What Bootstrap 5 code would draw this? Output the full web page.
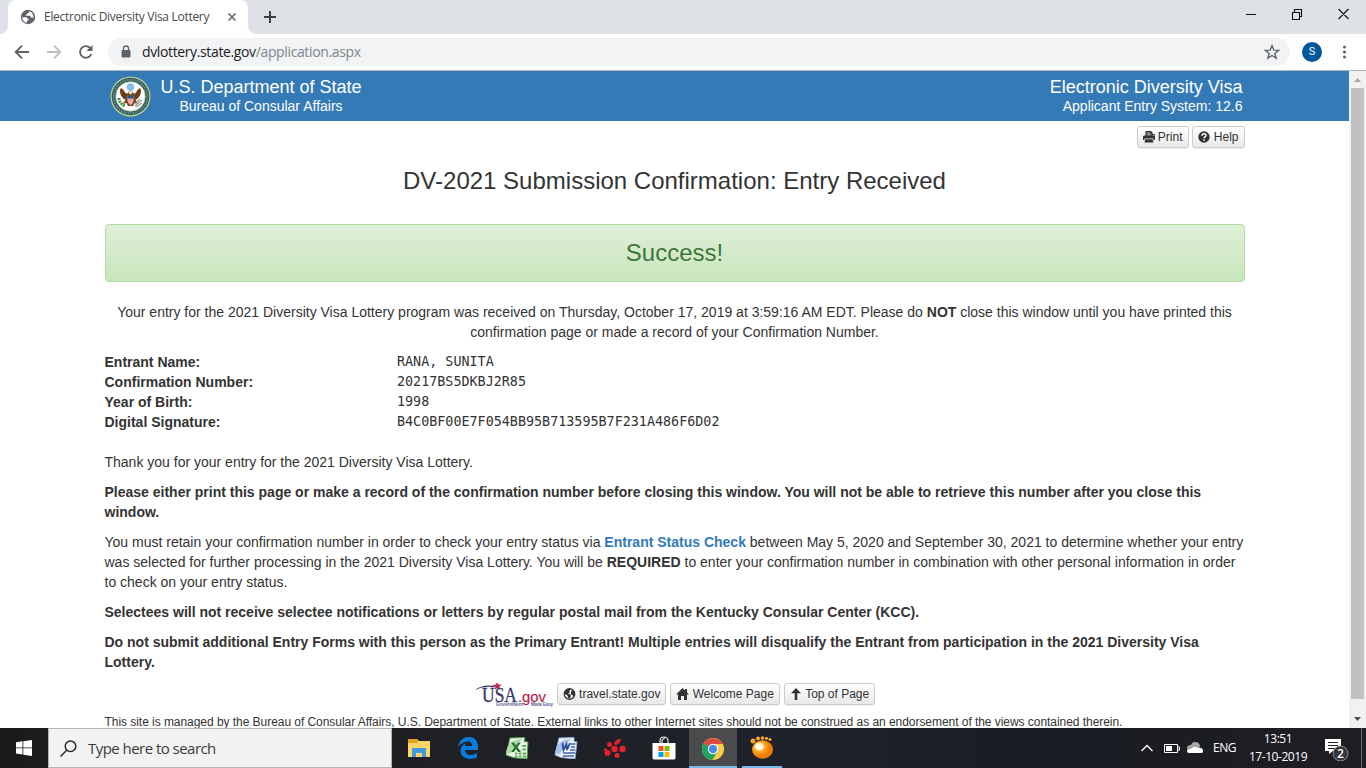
<!DOCTYPE html>
<html lang="en">
<head>
<meta charset="utf-8">
<meta name="viewport" content="width=device-width, initial-scale=1">
<title>Electronic Diversity Visa Lottery</title>
<link href="https://cdn.jsdelivr.net/npm/bootstrap@5.3.0/dist/css/bootstrap.min.css" rel="stylesheet">
<style>
body{width:1366px;height:768px;font-family:"Liberation Sans",Arial,sans-serif;font-size:14px;line-height:20px;color:#333;background:#fff}
svg{display:block;flex:none}
.ui{font-family:"Open Sans","Noto Sans",sans-serif}
.tabstrip{height:34px;background:#dee1e6}
.tab{width:240px;height:34px;margin-left:8px;background:#fff;border-radius:8px 8px 0 0;padding-left:12px;font-size:12px;color:#45494d;position:relative}
.tab::before,.tab::after{content:"";position:absolute;bottom:0;width:8px;height:8px}
.tab::before{left:-8px;background:radial-gradient(circle at 0 0,#dee1e6 7.5px,#fff 8px)}
.tab::after{right:-8px;background:radial-gradient(circle at 100% 0,#dee1e6 7.5px,#fff 8px)}
.tab-title{width:184px;margin-left:8px;letter-spacing:-.29px;white-space:nowrap}
.win-ctl{margin-bottom:6px}
.toolbar{height:36px;background:#fff}
.omnibox{width:1182px;height:28px;border-radius:14px;background:#f1f3f4;margin-left:14px;padding-left:12px;padding-right:10px;font-size:14px;color:#80868b}
.url{margin-left:10px;letter-spacing:-.37px}
.url b{font-weight:400;color:#202124}
.avatar{width:20px;height:20px;border-radius:50%;background:#01579b;color:#fff;font:11px/20px Roboto,sans-serif}
.rule{height:1px;background:#b6b4b6}
.viewport{height:657px}
.site-head{height:50px;background:#337ab7;color:#fff}
.wrap{width:1140px;margin-left:104.5px}
.h-a{font-size:18px;line-height:20px}
.btn-xs{--bs-btn-padding-x:5px;--bs-btn-padding-y:1px;--bs-btn-font-size:12px;--bs-btn-line-height:1.5;--bs-btn-border-radius:3px;--bs-btn-border-color:#ccc;--bs-btn-color:#333;display:inline-flex;align-items:center;height:22px;gap:3.3px;white-space:nowrap;background:linear-gradient(#fff,#e8e8e8);box-shadow:inset 0 1px 0 rgba(255,255,255,.15),0 1px 1px rgba(0,0,0,.075)}
.page-title{font-size:24px;line-height:26px;margin:20px 0 30px}
.ok-box{height:58px;border:1px solid #b2dba1;border-radius:4px;background:linear-gradient(#dff0d8,#c8e5bc);color:#3c763d;font-size:24px;line-height:56px;margin-bottom:20px}
.wrap p{margin:0 0 10px;white-space:nowrap}
.wrap a{color:#337ab7;font-weight:700;text-decoration:none}
.fields{display:grid;grid-template-columns:292.5px auto;grid-auto-rows:20px;margin-bottom:20px}
.fields dt,.fields dd{margin:0;font-size:14px;line-height:20px}
.fields dd{font-family:"DejaVu Sans Mono",monospace;font-size:13.4px;line-height:20px}
.scroller{width:17px;background:#f1f1f1}
.thumb{width:13px;height:611px;background:#c1c1c1}
.site-foot{font-size:12px;line-height:17px;margin-top:9px;white-space:nowrap;letter-spacing:-.047px}
.usagov{width:78px;height:24px}
.taskbar{height:40px;background:linear-gradient(90deg,#1b1b1b 0,#1f2024 420px,#1f222c 800px,#1b1d25 1000px,#1d1e22 1366px);color:#fff}
.start{width:48px}
.search-box{width:344px;height:40px;background:#f2f2f2;border:1px solid #b5b5b5;color:#3b3b3b;font-size:15px;padding-left:11px}
.app{width:48px;height:40px;margin-right:1px}
.app.on{background:#4a4b4d;border-bottom:2px solid #76b9ed}
.app.run{width:40px;margin-left:4px;border-bottom:2px solid #76b9ed}
.clock{width:76px;font-size:12px;line-height:18px;letter-spacing:-.45px}
.peek{width:1px;height:40px;background:#66676a}
</style>
</head>
<body class="d-flex flex-column overflow-hidden">
<div class="tabstrip d-flex align-items-center ui">
  <div class="tab d-flex align-items-center">
    <svg width="16" height="16" viewBox="0 0 16 16"><circle cx="8" cy="8" r="7.2" fill="#5f6368"/><path d="M2.200 8.300h3.500c1.200 0 1.600.6 1.600 1.500h1.200v1.600H7v2.300C4.300 13.500 2.200 11.200 2.200 8.300zM9.300 2.300c.2 1.400-.7 1.900-2 1.900v1.200H5.800v1.400h3.600c.9 0 1.300.5 1.300 1.600h1.600c.6 0 .9.500 1 1.200.9-2.900-.9-6.400-4-7.300z" fill="#fff"/></svg>
    <span class="tab-title">Electronic Diversity Visa Lottery</span>
    <svg width="8" height="8" viewBox="0 0 8 8" stroke="#5f6368" stroke-width="1.500"><path d="M.5.5l7 7M7.500.5l-7 7"/></svg>
  </div>
  <svg class="ms-3" width="12" height="12" viewBox="0 0 12 12" stroke="#3c4043" stroke-width="2"><path d="M6 0v12M0 6h12"/></svg>
  <div class="win-ctl d-flex align-items-center ms-auto me-3">
    <svg width="104" height="12" viewBox="0 0 104 12" fill="none" stroke="#111" stroke-width="1.100"><path d="M0 6.500h10M46.500 4.500h7v7h-7zM48.500 4v-2.500h7v7h-2M92.500 1l10 10M102.500 1l-10 10"/></svg>
  </div>
</div>
<div class="toolbar d-flex align-items-center ui">
  <svg width="94" height="20" viewBox="0 0 94 20" fill="none" stroke-width="1.900"><path d="M29 10H16M22 3.700L15.700 10l6.300 6.300" stroke="#5f6368"/><path d="M47 10h13M54 3.700l6.300 6.300-6.300 6.300" stroke="#bcbec1"/><path d="M91.300 12a5.800 5.800 0 1 1-1.200-6" stroke="#5f6368"/><path d="M92.500 3v6h-6z" fill="#5f6368"/></svg>
  <div class="omnibox d-flex align-items-center">
    <svg width="12" height="14" viewBox="0 0 12 14"><rect x="1.500" y="5" width="9" height="7.500" rx="1" fill="#5f6368"/><path d="M3.500 5.500V3.500a2.500 2.500 0 0 1 5 0v2" fill="none" stroke="#5f6368" stroke-width="1.300"/></svg>
    <span class="url"><b>dvlottery.state.gov</b>/application.aspx</span>
    <svg class="ms-auto" width="16" height="16" viewBox="0 0 15 15" fill="none" stroke="#5f6368" stroke-width="1.300"><path d="M7.500 1.500l1.700 4.200 4.500.3-3.500 2.900 1.200 4.400-3.900-2.500-3.900 2.500 1.200-4.400L1.300 6l4.500-.3z"/></svg>
  </div>
  <div class="avatar text-center ms-auto">S</div>
  <svg style="margin:0 20px 0 21px" width="3" height="14" viewBox="0 0 3 14" fill="#5f6368"><circle cx="1.500" cy="2" r="1.500"/><circle cx="1.500" cy="7" r="1.500"/><circle cx="1.500" cy="12" r="1.500"/></svg>
</div>
<div class="rule flex-shrink-0"></div>
<div class="viewport d-flex overflow-hidden flex-shrink-0">
  <main class="flex-grow-1">
    <header class="site-head">
      <div class="wrap d-flex h-100 align-items-center">
        <svg style="margin:0 0 0 5px" width="41" height="41" viewBox="0 0 41 41">
          <circle cx="20.500" cy="20.500" r="20" fill="#c9cf8c"/><circle cx="20.500" cy="20.500" r="18.800" fill="#275d70"/>
          <circle cx="20.500" cy="20.500" r="16.800" fill="none" stroke="#a9b77b" stroke-width="2" stroke-dasharray="1.300 1.200" opacity=".6"/>
          <circle cx="20.500" cy="20.500" r="14.700" fill="#fff" stroke="#d0c878" stroke-width=".7"/>
          <circle cx="20.500" cy="11" r="3.800" fill="#7fc0ec"/>
          <path d="M20.500 14.500c-2 0-2 2-3 3-2 0-3-1-3.500-3-1-1-2-2-3-2.500-1.500 2-1.500 4-.5 6 1 3 3 5 5 6l-3 4 4-1 1.500 3h5l1.500-3 4 1-3-4c2-1 4-3 5-6 1-2 1-4-.5-6-1 .5-2 1.500-3 2.500-.5 2-1.500 3-3.500 3-1-1-1-3-3-3z" fill="#75461f"/>
          <path d="M12.500 15l3 6M11 18l4 5M28.500 15l-3 6M30 18l-4 5" stroke="#3f2a1d" stroke-width=".8"/>
          <path d="M17.500 20h6v5q-1 3-3 4-2-1-3-4z" fill="#f2a7ac"/><path d="M17.500 19.500h6v3h-6z" fill="#26558d"/>
          <circle cx="20.500" cy="16.500" r="1.800" fill="#e8e3d3"/>
          <path d="M9 22q0 5 6 8" stroke="#3f9152" stroke-width="3" stroke-dasharray="2 .7" fill="none"/><path d="M25 30l7-6M26 31l6-4M25 28l5-5" stroke="#9b9b9b" stroke-width="1.200"/>
        </svg>
        <div class="text-center" style="width:206px;margin-left:7.500px"><div class="h-a text-nowrap">U.S. Department of State</div><div style="line-height:18px">Bureau of Consular Affairs</div></div>
        <div class="ms-auto text-end" style="padding-right:2px"><div class="h-a">Electronic Diversity Visa</div><div style="line-height:18px">Applicant Entry System: 12.6</div></div>
      </div>
    </header>
    <div class="wrap">
      <div class="d-flex justify-content-end" style="padding-top:5px;gap:3.300px">
        <button class="btn btn-xs"><svg width="12" height="12" viewBox="0 0 12 12" fill="#333"><path d="M2.500 0h5.500l1.500 1.500V5h7M.8 4.500H2.500V0H8l1.500 1.500v3h1.700L12 5.300V9h-1.500V7.500h-9V9H0V5.300zM2.300 8.300h7.400l.8 3.200h-9z"/><path d="M3.800 1.200H7v1h1.300v2.300H3.800z" fill="#888"/></svg>Print</button>
        <button class="btn btn-xs" style="gap:4px"><svg width="12" height="12" viewBox="0 0 12 12"><circle cx="6" cy="6" r="5.700" fill="#333"/><path d="M4 4.700C4 2.200 8 2.200 8 4.400 8 5.800 6 5.800 6 7.300M6 8.300v1.500" fill="none" stroke="#fff" stroke-width="1.500"/></svg>Help</button>
      </div>
      <h1 class="page-title text-center fw-normal">DV-2021 Submission Confirmation: Entry Received</h1>
      <div class="ok-box text-center">Success!</div>
      <p class="text-center">Your entry for the 2021 Diversity Visa Lottery program was received on Thursday, October 17, 2019 at 3:59:16 AM EDT. Please do <b>NOT</b> close this window until you have printed this<br>confirmation page or made a record of your Confirmation Number.</p>
      <dl class="fields">
        <dt>Entrant Name:</dt><dd>RANA, SUNITA</dd>
        <dt>Confirmation Number:</dt><dd>20217BS5DKBJ2R85</dd>
        <dt>Year of Birth:</dt><dd>1998</dd>
        <dt>Digital Signature:</dt><dd>B4C0BF00E7F054BB95B713595B7F231A486F6D02</dd>
      </dl>
      <p>Thank you for your entry for the 2021 Diversity Visa Lottery.</p>
      <p class="fw-bold">Please either print this page or make a record of the confirmation number before closing this window. You will not be able to retrieve this number after you close this<br>window.</p>
      <p>You must retain your confirmation number in order to check your entry status via <a href="#">Entrant Status Check</a> between May 5, 2020 and September 30, 2021 to determine whether your entry<br>was selected for further processing in the 2021 Diversity Visa Lottery. You will be <b>REQUIRED</b> to enter your confirmation number in combination with other personal information in order<br>to check on your entry status.</p>
      <p class="fw-bold">Selectees will not receive selectee notifications or letters by regular postal mail from the Kentucky Consular Center (KCC).</p>
      <p class="fw-bold">Do not submit additional Entry Forms with this person as the Primary Entrant! Multiple entries will disqualify the Entrant from participation in the 2021 Diversity Visa<br>Lottery.</p>
      <div class="d-flex justify-content-center" style="gap:4px;height:23px;padding:1px 0 0 1px">
        <svg class="usagov" viewBox="0 0 78 24"><path d="M0 7Q8 .5 20 3.200L19 4.300Q9 2.500 0 7z" fill="#34386c"/><path d="M17 2l3.700-.2L22.500-1l1 2.700 3.500-.2-2.700 2.300 1 3-3-1.700-2.500 1.300.5-2.600z" fill="#c8234a"/><text x="7" y="18.500" font-family="Liberation Serif,serif" font-size="20" textLength="35" lengthAdjust="spacingAndGlyphs" fill="#34386c" stroke="#34386c" stroke-width=".3">USA</text><text x="43" y="18.500" font-family="Liberation Sans,sans-serif" font-size="15" textLength="28" lengthAdjust="spacingAndGlyphs" fill="#b51d49" stroke="#b51d49" stroke-width=".2">.gov</text><text x="21" y="23" font-family="Liberation Sans,sans-serif" font-size="4.500" font-weight="bold" textLength="27" lengthAdjust="spacingAndGlyphs" fill="#5c5f92">Government</text><text x="56" y="23" font-family="Liberation Sans,sans-serif" font-size="4.500" font-weight="bold" textLength="22" fill="#5c5f92">Made Easy</text></svg>
        <button class="btn btn-xs"><svg width="13" height="12" viewBox="0 0 13 12"><circle cx="6.500" cy="6" r="5.200" fill="#fff" stroke="#333" stroke-width="1.400"/><path d="M1.500 4l2-2.500 3-.7 1 1.200-1.500 1.200 1 1-2 1.300 2.500 1 .5 1.500-1.500 2.700-1.500-1-.5-2.200-2.500-1.500zM9 2l3 2v3.500l-1.500 1.500-1-2-1.500-.5 0-2.500z" fill="#333"/></svg>travel.state.gov</button>
        <button class="btn btn-xs"><svg width="13" height="12" viewBox="0 0 13 12" fill="#333"><path d="M6.500 0L9 2.500V1h2v3.500L13 6.500h-2V12H8V8H5v4H2V6.500H0z"/></svg>Welcome Page</button>
        <button class="btn btn-xs"><svg width="12" height="12" viewBox="0 0 12 12" fill="#333"><path d="M6 0l5 5.200H7.300V12H4.700V5.200H1z"/></svg>Top of Page</button>
      </div>
      <div class="site-foot">This site is managed by the Bureau of Consular Affairs, U.S. Department of State. External links to other Internet sites should not be construed as an endorsement of the views contained therein.</div>
    </div>
  </main>
  <div class="scroller d-flex flex-column align-items-center flex-shrink-0">
    <svg width="17" height="17" viewBox="0 0 17 17"><path d="M5 11l3.500-4 3.500 4z" fill="#a3a3a3"/></svg>
    <div class="thumb"></div>
    <svg class="mt-auto" width="17" height="17" viewBox="0 0 17 17"><path d="M5 6l3.500 4L12 6z" fill="#505050"/></svg>
  </div>
</div>
<footer class="taskbar d-flex align-items-center flex-shrink-0 ui">
  <div class="start d-flex justify-content-center"><svg width="16" height="16" viewBox="0 0 16 16" fill="#fff"><path d="M0 2.200l6.500-.9v6.200H0zM7.300 1.200L16 0v7.500H7.300zM0 8.300h6.500v6.200L0 13.600zM7.300 8.300H16V16l-8.700-1.200z"/></svg></div>
  <div class="search-box d-flex align-items-center"><svg width="17" height="17" viewBox="0 0 17 17" fill="none" stroke="#222" stroke-width="1.400"><circle cx="10.500" cy="6.300" r="5.300"/><path d="M6.700 10.200L.5 16.400"/></svg><span style="margin-left:11px;letter-spacing:-.54px">Type here to search</span></div>
  <div class="d-flex" style="margin-left:3px">
    <div class="app d-flex align-items-center justify-content-center"><svg width="22" height="20" viewBox="0 0 22 20"><path d="M0 1h9l2 2h11v16H0z" fill="#ffd567"/><path d="M0 1h9l1 2-1 2H0z" fill="#e4a11b"/><path d="M4 10h14v9h-4v-4H8v4H4z" fill="#3f9bdd"/></svg></div>
    <div class="app d-flex align-items-center justify-content-center"><svg width="22" height="22" viewBox="0 0 22 22"><path d="M1 10C2 3 7 0 12 0c6 0 9 5 9 9v4H8c0 6 8 6 12 3v4.500C12 24 3 21 3.500 13.500 4 9 7 7 9 6 8 7 8 8 8 9h7c0-3-1.500-4.500-4-4.500C7 4.500 3 7 1 10z" fill="#0a7bdc"/></svg></div>
    <div class="app d-flex align-items-center justify-content-center"><svg width="24" height="22" viewBox="0 0 24 22"><path d="M5 1l15-.5-1 4 4 .5-1 17-14-1.500L1 18z" fill="#eef6ed" stroke="#4b9c43" stroke-width="1"/><path d="M1 17C2 7 7 2 18 2L14 5 6 16z" fill="#b1d8a8"/><path d="M6 5.500h3l2 3 2-3h3l-3.500 4.500L16 15h-3l-2-3-2 3H6l3.500-4.500z" fill="#21782b"/><path d="M16 9h5M16 12.500h5M10 16.500h11M10 19.500h11" stroke="#62a75b" stroke-width="2"/><path d="M17 7v14M13 15v6" stroke="#fff"/></svg></div>
    <div class="app d-flex align-items-center justify-content-center"><svg width="24" height="22" viewBox="0 0 24 22"><path d="M5 1l15-.5v4L23 5l-2 17-14-1.500L1 18z" fill="#edf2fa" stroke="#8aa8d7" stroke-width="1"/><path d="M1 17C2 7 7 2 18 2L12 6 6 17z" fill="#a9c1e8"/><path d="M8.500 6l1 7 3-6 .5 6 3-7" fill="none" stroke="#244d9d" stroke-width="1.800"/><path d="M16.500 7h5M17 10h4M16 13h5M9 16h12M9 19h11" stroke="#4267ac" stroke-width="1.300"/></svg></div>
    <div class="app d-flex align-items-center justify-content-center"><svg width="22" height="22" viewBox="0 0 22 22" fill="#e7202c"><circle cx="10.500" cy="12" r="3.200"/><circle cx="18.500" cy="12" r="3.200"/><circle cx="5.500" cy="7.500" r="2.500"/><circle cx="3.500" cy="16" r="3"/><circle cx="13" cy="18.500" r="2.500"/><circle cx="1.500" cy="12.500" r="1.500"/><path d="M10 7q1-5 7-5-1 5-5 6z"/></svg></div>
    <div class="app d-flex align-items-center justify-content-center"><svg width="24" height="24" viewBox="0 0 24 24"><path d="M8 7V5q0-4 4-4t4 4v2M10 7V5q0-2 3-3" fill="none" stroke="#eee" stroke-width="1.100"/><path d="M.5 7h23v15q0 1.500-2 1.500h-19q-2 0-2-1.500z" fill="#fff"/><path d="M6.500 10h5v5h-5z" fill="#f25022"/><path d="M12.500 10h5v5h-5z" fill="#7fba00"/><path d="M6.500 16h5v5h-5z" fill="#00a4ef"/><path d="M12.500 16h5v5h-5z" fill="#ffb900"/></svg></div>
    <div class="app on d-flex align-items-center justify-content-center"><svg class="mt-1" style="margin-right:1px" width="22" height="22" viewBox="0 0 22 22"><circle cx="11" cy="11" r="11" fill="#fc4"/><path d="M11 11L1.500 5.500A11 11 0 0 1 20.600 6H11z" fill="#dd4b3e"/><path d="M1.500 5.500A11 11 0 0 0 10.500 22l5-8.500L11 11z" fill="#1ea362"/><circle cx="11" cy="11" r="5.200" fill="#fff"/><circle cx="11" cy="11" r="4.200" fill="#4a88ee"/></svg></div>
    <div class="app run d-flex align-items-center justify-content-center"><svg width="24" height="23" viewBox="0 0 24 23"><defs><radialGradient id="paw" cx=".35" cy=".35"><stop offset="0" stop-color="#fffbe8"/><stop offset=".35" stop-color="#fff1cc"/><stop offset=".5" stop-color="#ffad28"/><stop offset="1" stop-color="#ee7c08"/></radialGradient></defs><ellipse cx="12.500" cy="13.500" rx="10.500" ry="9.300" fill="url(#paw)"/><g fill="#ffa329"><circle cx="3" cy="5" r="2.500"/><circle cx="8" cy="2.500" r="2"/><circle cx="12.500" cy="2" r="1.800"/><circle cx="16.500" cy="2.300" r="1.600"/><circle cx="20" cy="3.500" r="1.500"/></g></svg></div>
  </div>
  <div class="d-flex align-items-center ms-auto h-100">
    <svg width="62" height="16" viewBox="0 0 62 16"><path d="M.5 11L6 5.500l5.500 5.500" fill="none" stroke="#fff" stroke-width="1.300"/><path d="M23.500 4.500h13v8h-13zM37 7h1.500v3H37" fill="none" stroke="#fff"/><path d="M25 6h6v5h-6z" fill="#fff"/><path d="M46 8q0-3 4-3 1-3 4-3 5 0 5 5l-8 5h-3q-2-1-2-4z" fill="#a7a7a7"/><path d="M48 13q-2 0-2-2t4-2q1-2 4-2 2 0 3 1 4-1 5 2 1 3-2 3z" fill="#fff"/></svg>
    <span style="width:24px;margin-left:10px;font-size:12px;letter-spacing:-.5px">ENG</span>
    <div class="clock text-center" style="margin-left:3px">13:51<br>17-10-2019</div>
    <svg style="margin-left:8px" width="26" height="26" viewBox="0 0 26 26"><path d="M1 4h16v12H9l-4 3v-3H1z" fill="#fff"/><path d="M4 7.500h10M4 10.500h10M4 13.500h7" stroke="#222"/><circle cx="16.500" cy="18.500" r="7.500" fill="#36373b" stroke="#909194"/><text x="16.500" y="23" text-anchor="middle" font-family="Open Sans,sans-serif" font-size="12" font-weight="600" fill="#fff">2</text></svg>
    <div class="peek" style="margin:0 4px 0 11px"></div>
  </div>
</footer>
<script src="https://cdn.jsdelivr.net/npm/bootstrap@5.3.0/dist/js/bootstrap.bundle.min.js"></script>
</body>
</html>
